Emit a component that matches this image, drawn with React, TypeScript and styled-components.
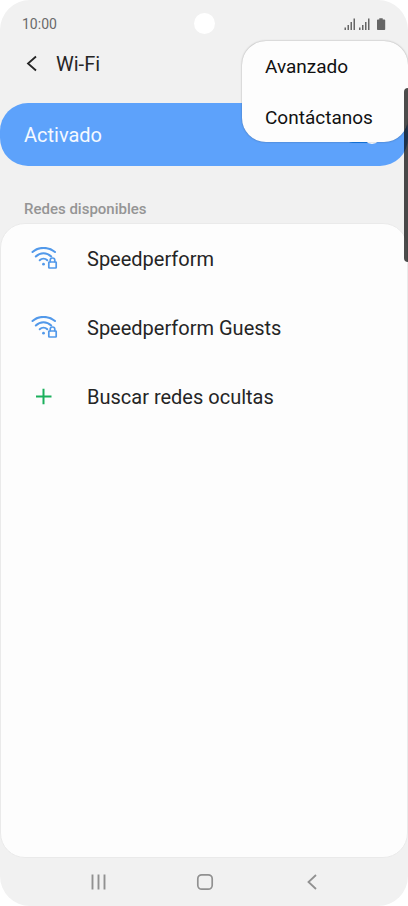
import React from 'react';
import styled, { createGlobalStyle } from 'styled-components';

const GlobalStyle = createGlobalStyle`
  *, *::before, *::after { box-sizing: border-box; }
  body { margin: 0; background: #fff; font-family: Roboto, sans-serif; color: #252525; }
  button { border: 0; padding: 0; background: none; font: inherit; color: inherit; cursor: pointer; }
`;

const Screen = styled.div`
  position: relative;
  display: flex;
  flex-direction: column;
  min-height: 100vh;
  overflow: hidden;
  background: #f1f1f1;
  border-radius: 30px;
`;

const StatusBar = styled.div`
  display: grid;
  grid-template-columns: 1fr auto 1fr;
  align-items: center;
  height: 47px;
  padding: 0 22px;
  font-size: 14px;
  line-height: 20px;
  color: #6a6a6a;
`;

const Camera = styled.span`
  width: 21px;
  height: 21px;
  border-radius: 50%;
  background: #fff;
`;

const StatusIcons = styled.div`
  display: flex;
  justify-content: flex-end;
`;

const Header = styled.header`
  display: flex;
  align-items: center;
  height: 34px;
  padding-left: 20px;
`;

const BackButton = styled.button`
  display: flex;
  align-items: center;
  justify-content: center;
  width: 24px;
  height: 32px;
`;

const Title = styled.h1`
  margin: 0 0 0 12px;
  font-size: 20px;
  font-weight: 400;
  line-height: 24px;
`;

const Content = styled.main`
  flex: 1;
  display: flex;
  flex-direction: column;
  padding-top: 22px;
`;

const WifiToggle = styled.label`
  display: flex;
  align-items: center;
  justify-content: space-between;
  height: 63px;
  padding: 1px 27px 0 24px;
  border-radius: 28px;
  background: #5da2fb;
  color: #f4f9ff;
  font-size: 20px;
  line-height: 24px;
`;

const Switch = styled.input`
  appearance: none;
  display: flex;
  align-items: center;
  justify-content: flex-end;
  width: 36px;
  height: 16px;
  margin: 0;
  border-radius: 8px;
  background: #147be8;

  &::before {
    content: '';
    flex: none;
    width: 18px;
    height: 18px;
    border-radius: 50%;
    background: #fff;
  }
`;

const SectionTitle = styled.h2`
  margin: 33px 24px 4px;
  font-size: 15px;
  font-weight: 500;
  line-height: 20px;
  color: #959595;
`;

const Networks = styled.ul`
  flex: 1;
  margin: 0;
  padding: 0;
  list-style: none;
  border: 1px solid #eaeaea;
  border-radius: 25px;
  background: #fdfdfd;
`;

const NetworkButton = styled.button`
  display: flex;
  align-items: center;
  width: 100%;
  height: 69px;
  padding-left: 29px;
  text-align: left;
  font-size: 20px;
  line-height: 24px;
`;

const IconSlot = styled.span`
  display: flex;
  width: 57px;
`;

const NavBar = styled.nav`
  display: grid;
  grid-template-columns: repeat(3, 107px);
  justify-content: center;
  height: 48px;
  padding-left: 2px;
`;

const NavButton = styled.button`
  display: flex;
  align-items: center;
  justify-content: center;
`;

const Menu = styled.div`
  position: absolute;
  top: 41px;
  right: 0;
  display: flex;
  flex-direction: column;
  gap: 3px;
  width: 166px;
  padding-top: 2px;
  border-radius: 24px;
  background: #fdfdfd;
  box-shadow: 0 0 2px rgba(0, 0, 0, 0.35);
  color: #111;
`;

const MenuItem = styled.button`
  height: 48px;
  padding: 0 23px;
  text-align: left;
  font-size: 19px;
  line-height: 24px;
`;

const EdgePanel = styled.div`
  position: absolute;
  top: 88px;
  right: 0;
  width: 4px;
  height: 174px;
  border-radius: 4px 0 0 4px;
  background: rgba(0, 0, 0, 0.7);
`;

function StatusSymbols() {
  return (
    <svg width="42" height="14" viewBox="0 0 42 14" fill="#666" aria-hidden="true">
      {[0.5, 15].map((x) => (
        <g key={x} transform={`translate(${x} 0)`}>
          <rect x="0" y="10.500" width="1.500" height="2.500" />
          <rect x="3" y="8" width="1.500" height="5" />
          <rect x="6" y="5" width="1.500" height="8" />
          <rect x="9" y="1.500" width="1.500" height="11.500" />
        </g>
      ))}
      <path d="M35.300 2.500V1.200h3.400v1.300h1.700a.8.800 0 0 1 .8.800v8.900a.8.800 0 0 1-.8.800h-6.600a.8.800 0 0 1-.8-.8V3.300a.8.800 0 0 1 .8-.8z" />
    </svg>
  );
}

function SecuredWifiIcon() {
  return (
    <svg width="28" height="24" viewBox="0 0 28 24" fill="none" stroke="#5299ea" strokeWidth="2" strokeLinecap="round" aria-hidden="true">
      <path d="M2.500 5C8.500-.5 18.500-.5 25 5" />
      <path d="M5.800 9.500C10.200 5.200 16.800 5.200 21.200 9.500" />
      <path d="M9.700 13.300C11.900 11.200 15.100 11.200 17.300 13.300" />
      <circle cx="13.500" cy="17.200" r="1.400" fill="#5299ea" stroke="none" />
      <rect x="18.800" y="15" width="7.400" height="6" rx=".5" strokeWidth="1.700" />
      <path d="M20.200 14.700V13.300a2.300 2.300 0 0 1 4.600 0V14.700" strokeWidth="1.700" />
    </svg>
  );
}

function PlusIcon() {
  return (
    <svg width="28" height="24" viewBox="0 0 28 24" stroke="#1bb05c" strokeWidth="2" aria-hidden="true">
      <path d="M6 11.500h15.500M13.500 3.800v15.500" />
    </svg>
  );
}

const networks = [
  { name: 'Speedperform', Icon: SecuredWifiIcon },
  { name: 'Speedperform Guests', Icon: SecuredWifiIcon },
  { name: 'Buscar redes ocultas', Icon: PlusIcon },
];

export default function App() {
  return (
    <>
      <GlobalStyle />
      <Screen>
        <StatusBar>
          <time>10:00</time>
          <Camera />
          <StatusIcons>
            <StatusSymbols />
          </StatusIcons>
        </StatusBar>
        <Header>
          <BackButton aria-label="Volver">
            <svg width="12" height="18" viewBox="0 0 12 18" fill="none" stroke="#252525" strokeWidth="1.800" aria-hidden="true">
              <path d="M10 1.500 2 8.500l8 7" />
            </svg>
          </BackButton>
          <Title>Wi-Fi</Title>
        </Header>
        <Content>
          <WifiToggle>
            Activado
            <Switch type="checkbox" role="switch" defaultChecked />
          </WifiToggle>
          <SectionTitle>Redes disponibles</SectionTitle>
          <Networks>
            {networks.map(({ name, Icon }) => (
              <li key={name}>
                <NetworkButton>
                  <IconSlot>
                    <Icon />
                  </IconSlot>
                  {name}
                </NetworkButton>
              </li>
            ))}
          </Networks>
        </Content>
        <NavBar>
          <NavButton aria-label="Recientes">
            <svg width="16" height="16" viewBox="0 0 16 16" stroke="#919191" strokeWidth="1.900" aria-hidden="true">
              <path d="M2.500 .5v15M8.500 .5v15M14.500 .5v15" />
            </svg>
          </NavButton>
          <NavButton aria-label="Inicio">
            <svg width="18" height="18" viewBox="0 0 18 18" fill="none" stroke="#919191" strokeWidth="1.700" aria-hidden="true">
              <rect x="1.800" y="1.800" width="14.400" height="14.400" rx="4" />
            </svg>
          </NavButton>
          <NavButton aria-label="Atrás">
            <svg width="12" height="18" viewBox="0 0 12 18" fill="none" stroke="#919191" strokeWidth="1.800" aria-hidden="true">
              <path d="M10 2 2.500 9l7.500 7" />
            </svg>
          </NavButton>
        </NavBar>
        <Menu role="menu">
          <MenuItem role="menuitem">Avanzado</MenuItem>
          <MenuItem role="menuitem">Contáctanos</MenuItem>
        </Menu>
        <EdgePanel />
      </Screen>
    </>
  );
}
